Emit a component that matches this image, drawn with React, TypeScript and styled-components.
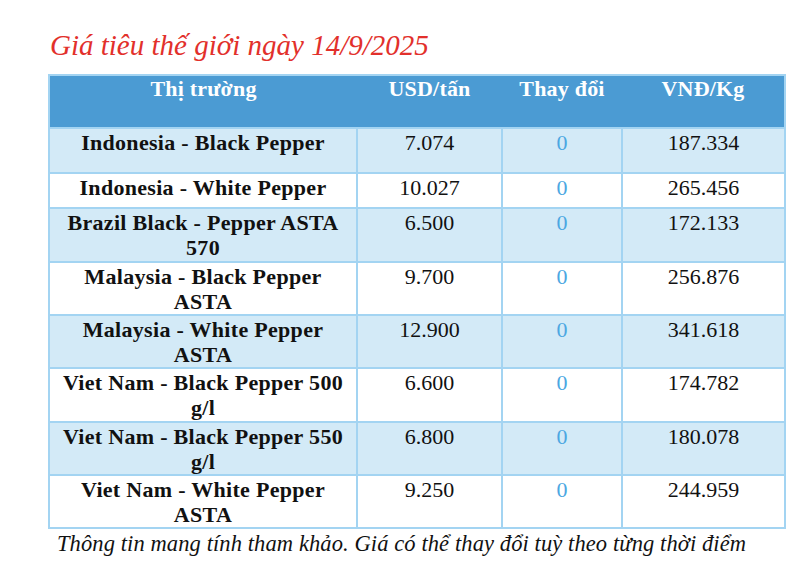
import React from "react";
import styled, { createGlobalStyle } from "styled-components";

interface PriceRow {
  market: string;
  usd: string;
  change: string;
  vnd: string;
  height: number;
}

const rows: PriceRow[] = [
  { market: "Indonesia - Black Pepper", usd: "7.074", change: "0", vnd: "187.334", height: 45 },
  { market: "Indonesia - White Pepper", usd: "10.027", change: "0", vnd: "265.456", height: 35 },
  { market: "Brazil Black - Pepper ASTA 570", usd: "6.500", change: "0", vnd: "172.133", height: 54 },
  { market: "Malaysia - Black Pepper ASTA", usd: "9.700", change: "0", vnd: "256.876", height: 52 },
  { market: "Malaysia - White Pepper ASTA", usd: "12.900", change: "0", vnd: "341.618", height: 53 },
  { market: "Viet Nam - Black Pepper 500 g/l", usd: "6.600", change: "0", vnd: "174.782", height: 54 },
  { market: "Viet Nam - Black Pepper 550 g/l", usd: "6.800", change: "0", vnd: "180.078", height: 53 },
  { market: "Viet Nam - White Pepper ASTA", usd: "9.250", change: "0", vnd: "244.959", height: 53 },
];

export default function App() {
  return (
    <>
      <GlobalStyle />
      <StyledPage>
        <StyledTitle>Giá tiêu thế giới ngày 14/9/2025</StyledTitle>
        <StyledTable>
          <colgroup>
            <col style={{ width: 308 }} />
            <col style={{ width: 145 }} />
            <col style={{ width: 120 }} />
            <col style={{ width: 163 }} />
          </colgroup>
          <thead>
            <tr>
              <StyledHeadCell>Thị trường</StyledHeadCell>
              <StyledHeadCell>USD/tấn</StyledHeadCell>
              <StyledHeadCell>Thay đổi</StyledHeadCell>
              <StyledHeadCell>VNĐ/Kg</StyledHeadCell>
            </tr>
          </thead>
          <tbody>
            {rows.map((row, i) => (
              <StyledRow key={row.market} $shaded={i % 2 === 0} $height={row.height}>
                <StyledMarketCell>{row.market}</StyledMarketCell>
                <StyledCell>{row.usd}</StyledCell>
                <StyledChangeCell>{row.change}</StyledChangeCell>
                <StyledCell>{row.vnd}</StyledCell>
              </StyledRow>
            ))}
          </tbody>
        </StyledTable>
        <StyledNote>
          Thông tin mang tính tham khảo. Giá có thể thay đổi tuỳ theo từng thời điểm
        </StyledNote>
      </StyledPage>
    </>
  );
}

const GlobalStyle = createGlobalStyle`
  html, body {
    margin: 0;
    padding: 0;
    background: #ffffff;
  }
  body {
    font-family: "Liberation Serif", "Times New Roman", serif;
    color: #111111;
  }
`;

const StyledPage = styled.main`
  width: 800px;
  height: 563px;
  box-sizing: border-box;
  padding: 29px 16px 0 48px;
  display: flex;
  flex-direction: column;
  overflow: hidden;
`;

const StyledTitle = styled.h1`
  margin: 0 0 12px 2px;
  font-size: 29px;
  line-height: 33px;
  font-style: italic;
  font-weight: 400;
  color: #e2302b;
`;

const StyledTable = styled.table`
  width: 736px;
  table-layout: fixed;
  border-collapse: collapse;
  border: 2px solid #a3d4f2;
  font-family: "Liberation Serif", "Times New Roman", serif;
`;

const StyledHeadCell = styled.th`
  height: 53px;
  box-sizing: border-box;
  padding: 0 6px;
  vertical-align: top;
  background: #4b9bd3;
  color: #ffffff;
  font-size: 22px;
  line-height: 26px;
  font-weight: 700;
  letter-spacing: 0.2px;
  text-align: center;
`;

const StyledRow = styled.tr<{ $shaded: boolean; $height: number }>`
  height: ${(props) => props.$height}px;
  background: ${(props) => (props.$shaded ? "#d3eaf7" : "#ffffff")};
`;

const StyledCell = styled.td`
  box-sizing: border-box;
  padding: 1px 10px 0;
  vertical-align: top;
  border: 2px solid #a3d4f2;
  font-size: 22px;
  line-height: 25px;
  text-align: center;
  color: #111111;
`;

const StyledMarketCell = styled(StyledCell)`
  font-weight: 700;
  letter-spacing: 0.3px;
`;

const StyledChangeCell = styled(StyledCell)`
  color: #4ca7e2;
`;

const StyledNote = styled.p`
  margin: 3px 0 0 9px;
  font-size: 22.5px;
  line-height: 24px;
  letter-spacing: 0.1px;
  font-style: italic;
  color: #111111;
`;
